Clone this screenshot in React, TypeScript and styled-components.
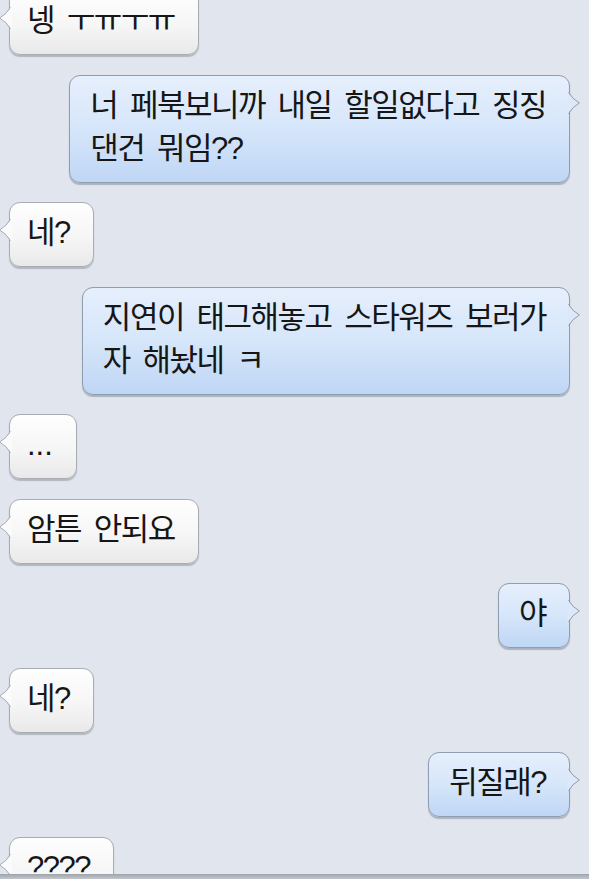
import React from "react";
import styled, { createGlobalStyle, css } from "styled-components";

const Global = createGlobalStyle`
  html, body {
    margin: 0;
    padding: 0;
    background: #e1e6ee;
    overflow: hidden;
  }
  * { box-sizing: border-box; }
`;

type Side = "in" | "out";

const Screen = styled.div`
  width: 589px;
  height: 879px;
  display: flex;
  flex-direction: column;
  background: #e1e6ee;
  font-family: "Liberation Sans", "Noto Sans CJK KR", sans-serif;
`;

const Thread = styled.div`
  flex: 1;
  overflow: hidden;
  display: flex;
  flex-direction: column;
  gap: 19.5px;
  padding: 0 19px 0 9px;
  margin-top: -10px;
`;

const Row = styled.div<{ $side: Side }>`
  display: flex;
  justify-content: ${(p) => (p.$side === "out" ? "flex-end" : "flex-start")};
`;

const Bubble = styled.div<{ $side: Side }>`
  position: relative;
  padding: 8px 23px 12px 17px;
  border-radius: 11px;
  font-size: 31px;
  line-height: 43px;
  letter-spacing: -1.5px;
  word-spacing: 5.5px;
  color: #161616;
  white-space: nowrap;
  ${(p) =>
    p.$side === "in"
      ? css`
          background: linear-gradient(#fefefe 0%, #f6f6f6 55%, #e9e9ea 100%);
          border: 1px solid #a9adb3;
          box-shadow: 0 1.5px 1px rgba(90, 96, 106, 0.35);
        `
      : css`
          padding-left: 20px;
          background: linear-gradient(#e6effc 0%, #d6e6fa 50%, #bfd6f5 100%);
          border: 1px solid #8f9db0;
          box-shadow: 0 1.5px 1px rgba(70, 84, 104, 0.35);
        `}
`;

const Line = styled.span`
  display: block;
`;

const Dots = styled.span`
  letter-spacing: 0px;
`;

const TailSvg = styled.svg<{ $side: Side }>`
  position: absolute;
  top: 16px;
  width: 12px;
  height: 22px;
  overflow: visible;
  ${(p) =>
    p.$side === "in"
      ? css`
          left: -11px;
        `
      : css`
          right: -11px;
          transform: scaleX(-1);
        `}
`;

function Tail({ side }: { side: Side }) {
  const fill = side === "in" ? "#fbfbfb" : "#dde9fb";
  const stroke = side === "in" ? "#a9adb3" : "#8f9db0";
  return (
    <TailSvg $side={side} viewBox="0 0 12 22">
      <path d="M12.5 -0.5 Q 8 7 0.6 11 Q 8 15 12.5 22.5 Z" fill={fill} />
      <path
        d="M11.5 0 Q 8 7 0.6 11 Q 8 15 11.5 22"
        fill="none"
        stroke={stroke}
        strokeWidth="1"
      />
    </TailSvg>
  );
}

const Footer = styled.div`
  height: 5px;
  flex: none;
  background: linear-gradient(#9fa4ab, #c3c7cd);
  position: relative;
  z-index: 1;
`;

type Msg = { side: Side; lines: React.ReactNode[] };

const messages: Msg[] = [
  { side: "in", lines: ["넹 ㅜㅠㅜㅠ"] },
  { side: "out", lines: ["너 페북보니까 내일 할일없다고 징징", "댄건 뭐임??"] },
  { side: "in", lines: ["네?"] },
  { side: "out", lines: ["지연이 태그해놓고 스타워즈 보러가", "자 해놨네 ㅋ"] },
  { side: "in", lines: [<Dots key="d">...</Dots>] },
  { side: "in", lines: ["암튼 안되요"] },
  { side: "out", lines: ["야"] },
  { side: "in", lines: ["네?"] },
  { side: "out", lines: ["뒤질래?"] },
  { side: "in", lines: ["????"] },
];

export default function App() {
  return (
    <>
      <Global />
      <Screen>
        <Thread>
          {messages.map((m, i) => (
            <Row key={i} $side={m.side}>
              <Bubble $side={m.side}>
                <Tail side={m.side} />
                {m.lines.map((l, j) => (
                  <Line key={j}>{l}</Line>
                ))}
              </Bubble>
            </Row>
          ))}
        </Thread>
        <Footer />
      </Screen>
    </>
  );
}
